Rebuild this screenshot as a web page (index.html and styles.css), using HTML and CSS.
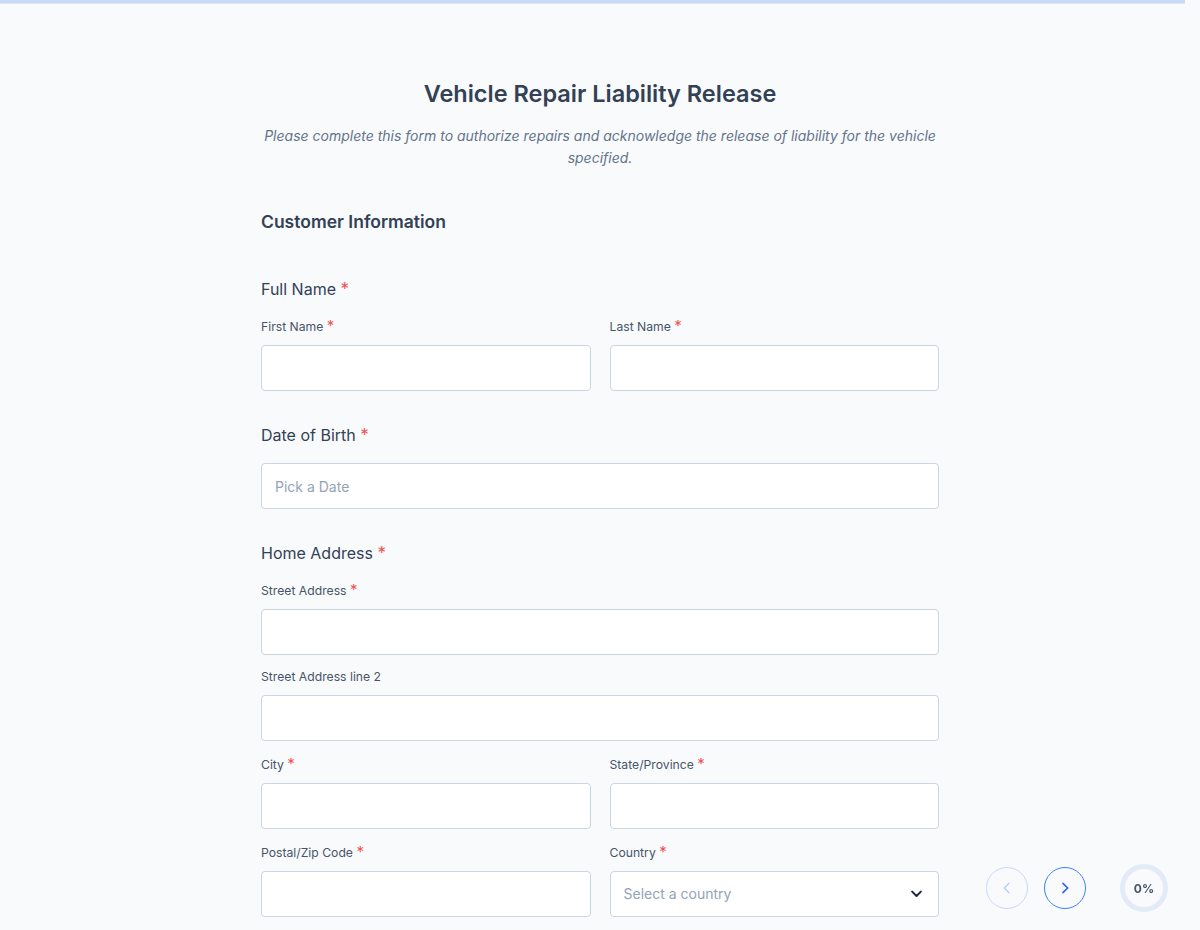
FILE: index.html
```html
<!DOCTYPE html>
<html lang="en">
<head>
<meta charset="utf-8">
<title>Vehicle Repair Liability Release</title>
<link rel="stylesheet" href="styles.css">
</head>
<body>
<div class="topbar"></div>
<main class="form">
  <header class="form-head">
    <h1 class="title">Vehicle Repair Liability Release</h1>
    <p class="subtitle">Please complete this form to authorize repairs and acknowledge the release of liability for the vehicle specified.</p>
  </header>

  <h2 class="section-title">Customer Information</h2>

  <section class="group">
    <h3 class="group-title">Full Name <span class="req">*</span></h3>
    <div class="row">
      <div class="field">
        <label class="label">First Name <span class="req">*</span></label>
        <input class="input" type="text">
      </div>
      <div class="field">
        <label class="label">Last Name <span class="req">*</span></label>
        <input class="input" type="text">
      </div>
    </div>
  </section>

  <section class="group">
    <h3 class="group-title">Date of Birth <span class="req">*</span></h3>
    <input class="input" type="text" placeholder="Pick a Date">
  </section>

  <section class="group">
    <h3 class="group-title">Home Address <span class="req">*</span></h3>
    <div class="field">
      <label class="label">Street Address <span class="req">*</span></label>
      <input class="input" type="text">
    </div>
    <div class="field">
      <label class="label">Street Address line 2</label>
      <input class="input" type="text">
    </div>
    <div class="row">
      <div class="field">
        <label class="label">City <span class="req">*</span></label>
        <input class="input" type="text">
      </div>
      <div class="field">
        <label class="label">State/Province <span class="req">*</span></label>
        <input class="input" type="text">
      </div>
    </div>
    <div class="row">
      <div class="field">
        <label class="label">Postal/Zip Code <span class="req">*</span></label>
        <input class="input" type="text">
      </div>
      <div class="field">
        <label class="label">Country <span class="req">*</span></label>
        <div class="select">
          <span class="select-text">Select a country</span>
          <svg class="chev" width="15" height="15" viewBox="0 0 24 24" fill="none" stroke="#1e293b" stroke-width="3.2" stroke-linecap="round" stroke-linejoin="round"><path d="M5 9l7 7 7-7"/></svg>
        </div>
      </div>
    </div>
  </section>
</main>

<nav class="pager">
  <button class="nav-btn prev" type="button" aria-label="Previous">
    <svg width="16" height="16" viewBox="0 0 24 24" fill="none" stroke="currentColor" stroke-width="2" stroke-linecap="round" stroke-linejoin="round"><path d="M15 5l-7 7 7 7"/></svg>
  </button>
  <button class="nav-btn next" type="button" aria-label="Next">
    <svg width="16" height="16" viewBox="0 0 24 24" fill="none" stroke="currentColor" stroke-width="2.4" stroke-linecap="round" stroke-linejoin="round"><path d="M9 5l7 7-7 7"/></svg>
  </button>
  <div class="progress">0%</div>
</nav>
</body>
</html>
```

FILE: styles.css
```css
* { box-sizing: border-box; }
html, body { margin: 0; padding: 0; }
body {
  background: #f8fafc;
  font-family: Inter, "Noto Sans", "Liberation Sans", sans-serif;
  color: #334155;
  min-height: 930px;
}
.topbar {
  height: 4px;
  width: 1185px;
  background: #c9d9f6;
  border-bottom: 1px solid #dbe6f9;
}
.form {
  width: 678px;
  margin: 0 auto;
  padding-top: 73px;
}
.form-head { text-align: center; }
.title {
  margin: 0;
  font-size: 23.5px;
  line-height: 34px;
  font-weight: 600;
  color: #334155;
}
.subtitle {
  margin: 14px 0 0;
  font-size: 14px;
  line-height: 22px;
  font-style: italic;
  color: #64748b;
}
.section-title {
  margin: 40px 0 0;
  font-size: 17.5px;
  line-height: 26px;
  font-weight: 600;
  color: #334155;
}
.group { margin-top: 32px; }
.group:first-of-type { margin-top: 42px; }
.group-title {
  margin: 0 0 16px;
  font-size: 16px;
  line-height: 24px;
  font-weight: 400;
  color: #334155;
}
.req { color: #f05252; font-size: 17px; line-height: 0; }
.label .req { font-size: 15px; }
.row {
  display: grid;
  grid-template-columns: 1fr 1fr;
  column-gap: 19px;
}
.field + .field { margin-top: 12px; }
.field + .row, .row + .row { margin-top: 14px; }
.row .field + .field { margin-top: 0; }
.label {
  display: block;
  margin-bottom: 8px;
  font-size: 12.2px;
  line-height: 20px;
  color: #475569;
}
.input, .select {
  display: block;
  width: 100%;
  height: 46px;
  border: 1px solid #cbd5e1;
  border-radius: 4px;
  background: #fff;
  padding: 0 13px;
  font-family: inherit;
  font-size: 14px;
  color: #334155;
  outline: none;
}
.input::placeholder { color: #94a3b8; }
.select {
  display: flex;
  align-items: center;
  justify-content: space-between;
  padding-right: 14px;
  padding-bottom: 1px;
}
.select-text { color: #94a3b8; }
.pager {
  position: fixed;
  right: 32px;
  bottom: 18px;
  display: flex;
  align-items: center;
  gap: 16px;
}
.nav-btn {
  width: 42px;
  height: 42px;
  border-radius: 50%;
  background: transparent;
  display: flex;
  align-items: center;
  justify-content: center;
  padding: 0;
  cursor: pointer;
}
.prev { border: 1.5px solid #c7d7f7; color: #b9cdf5; }
.next { border: 1.5px solid #3b82f6; color: #2563eb; }
.progress {
  width: 48px;
  height: 48px;
  margin-left: 18px;
  border-radius: 50%;
  border: 5px solid #e3eaf8;
  display: flex;
  align-items: center;
  justify-content: center;
  font-size: 12px;
  font-weight: 700;
  color: #475569;
}
```
